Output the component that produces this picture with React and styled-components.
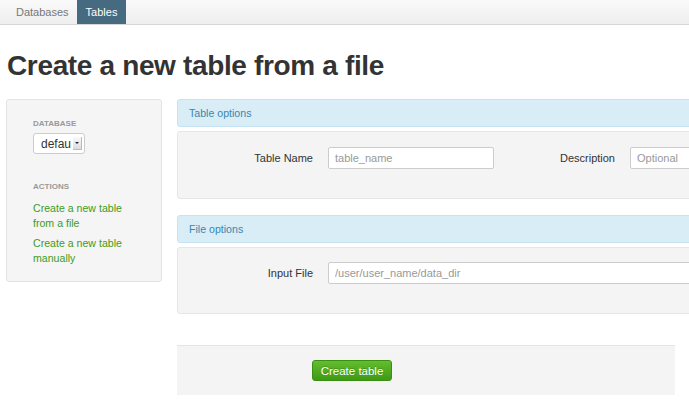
import styled, { createGlobalStyle } from 'styled-components';

const GlobalStyle = createGlobalStyle`
  html, body {
    margin: 0;
    padding: 0;
    background: #fff;
    overflow: hidden;
  }
  body {
    font-family: 'Liberation Sans', Arial, sans-serif;
    color: #333;
    font-size: 11px;
  }
`;

const NavBar = styled.div`
  display: flex;
  height: 24px;
  padding-left: 6px;
  background: linear-gradient(#fafafa, #eeeeee);
  border-bottom: 1px solid #d6d6d6;
`;

const NavTab = styled.div`
  display: flex;
  align-items: center;
  padding: ${p => (p.active ? '0 9px' : '0 7px 0 10px')};
  margin-right: 1px;
  font-size: 11px;
  color: ${p => (p.active ? '#fff' : '#777')};
  background: ${p => (p.active ? '#466a80' : 'transparent')};
`;

const Page = styled.div`
  padding: 0 6px;
`;

const Title = styled.h1`
  margin: 26px 0 19px 1px;
  font-size: 28px;
  line-height: 29px;
  font-weight: bold;
  color: #333;
  letter-spacing: -0.35px;
`;

const Row = styled.div`
  display: flex;
  align-items: flex-start;
  gap: 15px;
`;

const Sidebar = styled.div`
  flex: 0 0 156px;
  box-sizing: border-box;
  height: 183px;
  padding: 19px 20px 0 26px;
  background: #f5f5f5;
  border: 1px solid #e3e3e3;
  border-radius: 3px;
`;

const NavHeader = styled.div`
  font-size: 8px;
  font-weight: bold;
  text-transform: uppercase;
  color: #999;
  line-height: 10px;
  margin-bottom: ${p => p.gap}px;
`;

const SelectBox = styled.div`
  display: inline-flex;
  align-items: center;
  box-sizing: border-box;
  width: 52px;
  height: 21px;
  padding-left: 7px;
  background: #fff;
  border: 1px solid #ccc;
  border-radius: 3px;
  font-size: 12px;
  color: #333;
  margin-bottom: 28px;
`;

const SelectArrow = styled.span`
  margin-left: 2px;
  width: 8px;
  height: 12px;
  background: linear-gradient(#fafafa, #dcdcdc);
  border: 1px solid #bbb;
  border-top: none;
  border-left: none;
  display: flex;
  align-items: center;
  justify-content: center;
  &::after {
    content: '';
    border-left: 2px solid transparent;
    border-right: 2px solid transparent;
    border-top: 2px solid #222;
  }
`;

const ActionLink = styled.a`
  display: block;
  color: #3f9b1c;
  font-size: 10.6px;
  line-height: 15px;
  text-decoration: none;
  margin-bottom: 5px;
`;

const Main = styled.div`
  flex: 0 0 560px;
`;

const SectionHeader = styled.div`
  height: 28px;
  display: flex;
  align-items: center;
  padding-left: 11px;
  background: #d9edf7;
  border: 1px solid #c5e3f2;
  box-sizing: border-box;
  border-radius: 3px;
  color: #3a87ad;
  font-size: 10.6px;
  margin-bottom: 4px;
`;

const Panel = styled.div`
  box-sizing: border-box;
  height: ${p => p.h}px;
  padding-top: ${p => p.top}px;
  background: #f4f4f4;
  border: 1px solid #e6e6e6;
  border-radius: 3px;
  margin-bottom: 16px;
  display: flex;
  align-items: flex-start;
`;

const Label = styled.label`
  box-sizing: border-box;
  width: ${p => p.w}px;
  text-align: right;
  padding-right: 15px;
  font-size: 11px;
  color: #333;
  line-height: 22px;
  flex-shrink: 0;
`;

const Input = styled.input`
  box-sizing: border-box;
  width: ${p => p.w}px;
  height: 22px;
  padding: 0 6px;
  border: 1px solid #ccc;
  border-radius: 2px;
  background: #fff;
  font-family: 'Liberation Sans', Arial, sans-serif;
  font-size: 11px;
  color: #333;
  flex-shrink: 0;
  &::placeholder {
    color: #999;
  }
`;

const FormActions = styled.div`
  width: 498px;
  box-sizing: border-box;
  height: 50px;
  margin-top: 31px;
  padding: 14px 0 0 135px;
  background: #f4f4f4;
  border-top: 1px solid #e5e5e5;
`;

const Button = styled.button`
  width: 80px;
  height: 21px;
  border: 1px solid #3b8e12;
  border-radius: 3px;
  background: linear-gradient(#62bd2f, #3f9a14);
  color: #fff;
  font-family: 'Liberation Sans', Arial, sans-serif;
  font-size: 11.5px;
  text-shadow: 0 -1px 0 rgba(0, 0, 0, 0.2);
  padding: 0;
`;

export default function App() {
  return (
    <>
      <GlobalStyle />
      <NavBar>
        <NavTab>Databases</NavTab>
        <NavTab active>Tables</NavTab>
      </NavBar>
      <Page>
        <Title>Create a new table from a file</Title>
        <Row>
          <Sidebar>
            <NavHeader gap={4}>Database</NavHeader>
            <SelectBox>
              defau
              <SelectArrow />
            </SelectBox>
            <NavHeader gap={9}>Actions</NavHeader>
            <ActionLink href="#">Create a new table from a file</ActionLink>
            <ActionLink href="#">Create a new table manually</ActionLink>
          </Sidebar>
          <Main>
            <SectionHeader>Table options</SectionHeader>
            <Panel h={68} top={15}>
              <Label w={150}>Table Name</Label>
              <Input w={166} placeholder="table_name" />
              <Label w={136}>Description</Label>
              <Input w={200} placeholder="Optional" />
            </Panel>
            <SectionHeader>File options</SectionHeader>
            <Panel h={67} top={14}>
              <Label w={150}>Input File</Label>
              <Input w={420} placeholder="/user/user_name/data_dir" />
            </Panel>
            <FormActions>
              <Button>Create table</Button>
            </FormActions>
          </Main>
        </Row>
      </Page>
    </>
  );
}
